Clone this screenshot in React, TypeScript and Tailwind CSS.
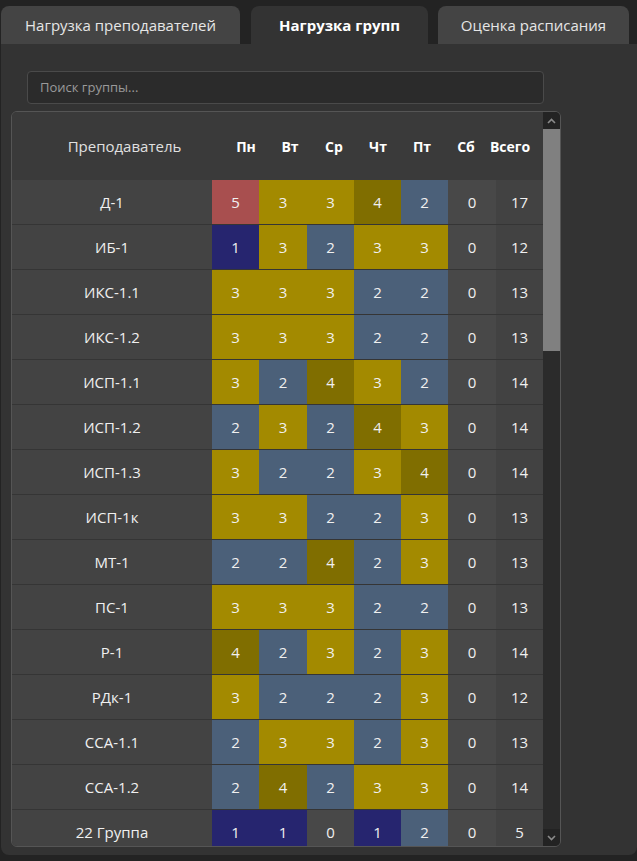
import React from "react";

type Row = { name: string; days: number[]; total: number };

const rows: Row[] = [
  { name: "Д-1", days: [5, 3, 3, 4, 2, 0], total: 17 },
  { name: "ИБ-1", days: [1, 3, 2, 3, 3, 0], total: 12 },
  { name: "ИКС-1.1", days: [3, 3, 3, 2, 2, 0], total: 13 },
  { name: "ИКС-1.2", days: [3, 3, 3, 2, 2, 0], total: 13 },
  { name: "ИСП-1.1", days: [3, 2, 4, 3, 2, 0], total: 14 },
  { name: "ИСП-1.2", days: [2, 3, 2, 4, 3, 0], total: 14 },
  { name: "ИСП-1.3", days: [3, 2, 2, 3, 4, 0], total: 14 },
  { name: "ИСП-1к", days: [3, 3, 2, 2, 3, 0], total: 13 },
  { name: "МТ-1", days: [2, 2, 4, 2, 3, 0], total: 13 },
  { name: "ПС-1", days: [3, 3, 3, 2, 2, 0], total: 13 },
  { name: "Р-1", days: [4, 2, 3, 2, 3, 0], total: 14 },
  { name: "РДк-1", days: [3, 2, 2, 2, 3, 0], total: 12 },
  { name: "ССА-1.1", days: [2, 3, 3, 2, 3, 0], total: 13 },
  { name: "ССА-1.2", days: [2, 4, 2, 3, 3, 0], total: 14 },
  { name: "22 Группа", days: [1, 1, 0, 1, 2, 0], total: 5 },
];

// load level -> cell colour
const cellBg: Record<number, string> = {
  0: "bg-[#484848]",
  1: "bg-[#26256f]",
  2: "bg-[#4b6079]",
  3: "bg-[#a38a00]",
  4: "bg-[#806e00]",
  5: "bg-[#a84f4f]",
};

const dayNames = ["Пн", "Вт", "Ср", "Чт", "Пт", "Сб", "Всего"];

const Tab = ({ label, active, w }: { label: string; active?: boolean; w: string }) => (
  <div
    className={`${w} h-[38px] rounded-t-lg flex items-center justify-center text-[15px] ${
      active ? "bg-[#333333] text-white font-bold" : "bg-[#444444] text-[#e6e6e6]"
    }`}
  >
    {label}
  </div>
);

export default function App() {
  return (
    <div className="w-[637px] h-[861px] overflow-hidden bg-[#232323] pl-px pt-[6px] font-['Open_Sans','Noto_Sans',sans-serif]">
      {/* Tabs */}
      <div className="flex">
        <Tab label="Нагрузка преподавателей" w="w-[239px]" />
        <div className="w-[11px]" />
        <Tab label="Нагрузка групп" w="w-[177px]" active />
        <div className="w-[10px]" />
        <Tab label="Оценка расписания" w="w-[191px]" />
      </div>

      {/* Panel */}
      <div className="h-[811px] bg-[#333333] rounded-b-lg pt-[27px]">
        <div className="ml-[26px] w-[517px] h-[33px] rounded border border-[#4a4a4a] bg-[#2b2b2b] flex items-center px-3 text-[13px] text-[#9a9a9a]">
          Поиск группы...
        </div>

        {/* Table */}
        <div className="mt-[7px] ml-[10px] w-[550px] h-[736px] border border-[#555555] rounded-md overflow-hidden flex">
          <div className="w-[531px] flex flex-col">
            <div className="h-[68px] shrink-0 bg-[#3a3a3a] grid grid-cols-[212px_repeat(7,44px)] items-center">
              <div className="pl-[13px] text-center text-[15px] text-[#e0e0e0]">Преподаватель</div>
              {dayNames.map((d) => (
                <div key={d} className="text-center text-[14px] font-bold text-white">
                  {d}
                </div>
              ))}
            </div>
            {rows.map((r) => (
              <div
                key={r.name}
                className="h-[45px] shrink-0 grid grid-cols-[200px_47px_48px_47px_47px_47px_48px_47px] border-b border-[#353535] text-[15px] text-[#f0f0f0]"
              >
                <div className="bg-[#434343] flex items-center justify-center">{r.name}</div>
                {r.days.map((v, i) => (
                  <div key={i} className={`${cellBg[v]} flex items-center justify-center`}>
                    {v}
                  </div>
                ))}
                <div className="bg-[#424242] flex items-center justify-center">{r.total}</div>
              </div>
            ))}
          </div>

          {/* Scrollbar */}
          <div className="w-[17px] bg-[#2b2b2b] flex flex-col">
            <div className="h-[17px] bg-[#232323] flex items-center justify-center">
              <svg width="9" height="6" viewBox="0 0 9 6">
                <path d="M1 5 L4.5 1.5 L8 5" fill="none" stroke="#8a8a8a" strokeWidth="1.6" />
              </svg>
            </div>
            <div className="h-[222px] bg-[#808080]" />
            <div className="flex-1" />
            <div className="h-[17px] bg-[#232323] flex items-center justify-center">
              <svg width="9" height="6" viewBox="0 0 9 6">
                <path d="M1 1 L4.5 4.5 L8 1" fill="none" stroke="#8a8a8a" strokeWidth="1.6" />
              </svg>
            </div>
          </div>
        </div>
      </div>
    </div>
  );
}
